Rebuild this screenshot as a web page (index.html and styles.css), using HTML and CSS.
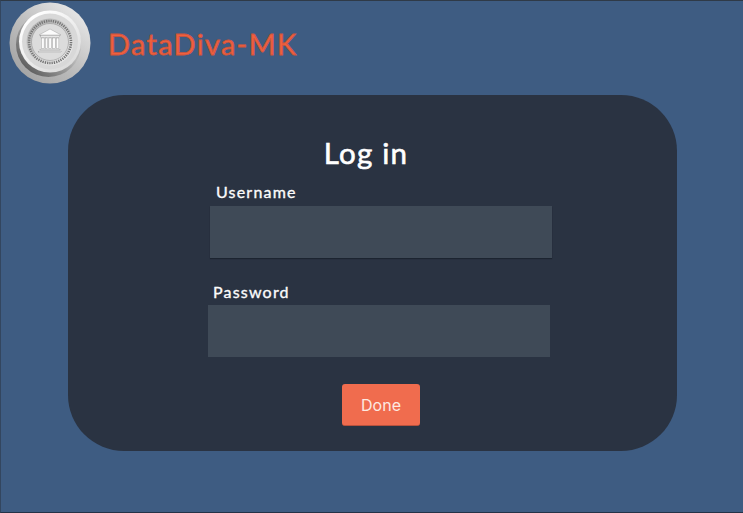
FILE: index.html
```html
<!DOCTYPE html>
<html lang="en">
<head>
<meta charset="utf-8">
<title>DataDiva-MK</title>
<link rel="stylesheet" href="styles.css">
</head>
<body>
<div class="frame">
  <header class="top">
    <svg class="logo" viewBox="0 0 82 82" width="82" height="82" aria-hidden="true">
      <defs>
        <linearGradient id="outer" x1="0.85" y1="0.1" x2="0.15" y2="0.9">
          <stop offset="0" stop-color="#e6e6e6"/>
          <stop offset="0.5" stop-color="#c0c0c0"/>
          <stop offset="1" stop-color="#a4a4a4"/>
        </linearGradient>
        <linearGradient id="shade" x1="0.9" y1="0.1" x2="0.15" y2="0.9">
          <stop offset="0.4" stop-color="#bcbcbc"/>
          <stop offset="1" stop-color="#5c5c5c"/>
        </linearGradient>
        <linearGradient id="ring" x1="0.2" y1="0.1" x2="0.8" y2="0.9">
          <stop offset="0" stop-color="#ffffff"/>
          <stop offset="1" stop-color="#dcdcdc"/>
        </linearGradient>
        <linearGradient id="face" x1="0.2" y1="0.1" x2="0.8" y2="0.9">
          <stop offset="0" stop-color="#b4b4b4"/>
          <stop offset="1" stop-color="#e8e8e8"/>
        </linearGradient>
      </defs>
      <circle cx="41" cy="41" r="40.5" fill="url(#outer)"/>
      <circle cx="39.5" cy="42.5" r="32.5" fill="url(#shade)"/>
      <circle cx="41" cy="39.5" r="31" fill="url(#ring)"/>
      <circle cx="41" cy="39.5" r="28" fill="#d8d8d8"/>
      <circle cx="41" cy="40" r="23.5" fill="url(#face)"/>
      <circle cx="41" cy="40" r="21" fill="none" stroke="#767676" stroke-width="2.6" stroke-dasharray="1.3 1"/>
      <circle cx="41" cy="40" r="18.5" fill="#dcdcdc" stroke="#969696" stroke-width="0.6"/>
      <g fill="#fbfbfb" stroke="#777" stroke-width="0.3">
        <path d="M41 27 L52 33 L30 33 Z"/>
        <rect x="31.5" y="33.6" width="19" height="1.4"/>
        <rect x="32.5" y="36" width="2.6" height="10.5"/>
        <rect x="36.2" y="36" width="2.6" height="10.5"/>
        <rect x="39.9" y="36" width="2.6" height="10.5"/>
        <rect x="43.6" y="36" width="2.6" height="10.5"/>
        <rect x="47.3" y="36" width="2.6" height="10.5"/>
        <rect x="31" y="47.2" width="20" height="1.4"/>
        <rect x="29.5" y="49.2" width="23" height="1.6"/>
      </g>
    </svg>
    <h2 class="brand">DataDiva-MK</h2>
  </header>
  <main class="card">
    <h1 class="title">Log in</h1>
    <div class="field field-user">
      <label class="label" for="u">Username</label>
      <input class="input input-user" id="u" type="text">
    </div>
    <div class="field field-pass">
      <label class="label" for="p">Password</label>
      <input class="input" id="p" type="password">
    </div>
    <button class="done" type="button">Done</button>
  </main>
</div>
</body>
</html>
```

FILE: styles.css
```css
* { box-sizing: border-box; }
html, body { margin: 0; height: 100%; }
body { background: #3e5c82; overflow: hidden; }
.frame {
  width: 743px;
  height: 513px;
  background: #3e5c82;
  border-top: 1px solid #2f3a47;
  border-bottom: 1px solid #243247;
  border-left: 1px solid #33465f;
  display: flex;
  flex-direction: column;
}
.top {
  display: flex;
  align-items: center;
  height: 94px;
  padding: 0 0 10px 8px;
  gap: 17px;
}
.logo { flex: none; }
.brand {
  margin: 0;
  font: 400 29px/1 "Lato", sans-serif;
  letter-spacing: 1.3px;
  color: #f0603f;
  -webkit-text-stroke: 0.8px #d0543a;
}
.card {
  width: 609px;
  height: 356px;
  margin-left: 67px;
  background: #2a3342;
  border-radius: 56px;
  display: flex;
  flex-direction: column;
  color: #fff;
}
.title {
  margin: 41px 0 0;
  font: 400 29.5px/34px "Lato", sans-serif;
  letter-spacing: 1.2px;
  -webkit-text-stroke: 0.6px #fff;
  text-align: center;
  padding-right: 13px;
}
.field { display: flex; flex-direction: column; width: 342px; }
.field-user { margin: 12px 0 0 142px; }
.field-pass { margin: 24px 0 0 140px; }
.label {
  font: 400 16px/20px "Lato", sans-serif;
  letter-spacing: 1.2px;
  -webkit-text-stroke: 0.35px #fbfbfb;
  padding-left: 6px;
  height: 24px;
  color: #fbfbfb;
}
.field-pass .label { height: 23px; padding-left: 5px; }
.input {
  width: 342px;
  height: 52px;
  background: #3f4a57;
  border: 0;
  outline: 0;
  display: block;
}
.input-user { box-shadow: 0 1px 1px rgba(20, 26, 36, 0.6); }
.done {
  align-self: flex-start;
  margin: 27px 0 0 274px;
  width: 78px;
  height: 42px;
  background: #f06c4e;
  border: 0;
  border-bottom: 1px solid #b9523d;
  border-radius: 3px;
  color: #fde9e2;
  font: 400 16px/1 "Inter", sans-serif;
}
```
